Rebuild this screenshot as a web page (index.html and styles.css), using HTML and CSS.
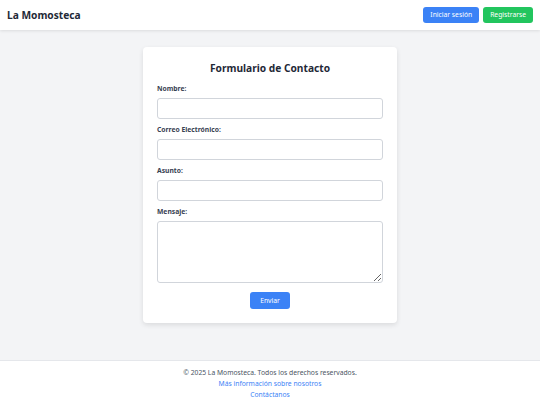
FILE: index.html
```html
<!DOCTYPE html>
<html lang="es">
<head>
  <meta charset="UTF-8">
  <meta name="viewport" content="width=device-width, initial-scale=1.0">
  <title>Contacto - La Momosteca</title>
  <link rel="stylesheet" href="styles.css">
</head>
<body>

<header class="topbar">
  <h1 class="brand">La Momosteca</h1>
  <nav class="actions">
    <a href="#" class="btn btn-blue">Iniciar sesión</a>
    <a href="#" class="btn btn-green">Registrarse</a>
  </nav>
</header>

<main class="main">
  <form class="card" id="contactForm">
    <h2 class="card-title">Formulario de Contacto</h2>

    <label for="nombre">Nombre:</label>
    <input type="text" id="nombre">

    <label for="correo">Correo Electrónico:</label>
    <input type="email" id="correo">

    <label for="asunto">Asunto:</label>
    <input type="text" id="asunto">

    <label for="mensaje">Mensaje:</label>
    <textarea id="mensaje"></textarea>

    <div class="submit-row">
      <button type="button" class="btn btn-blue btn-send">Enviar</button>
    </div>
  </form>
</main>

<footer class="footer">
  <p>© 2025 La Momosteca. Todos los derechos reservados.</p>
  <a href="#">Más información sobre nosotros</a>
  <a href="#">Contáctanos</a>
</footer>

</body>
</html>
```

FILE: styles.css
```css
body {
  font-family: 'Noto Sans', sans-serif;
  background-color: #f3f4f6;
  margin: 0;
  padding: 0;
  color: #1f2937;
}

.topbar {
  background-color: #fff;
  height: 30px;
  display: flex;
  align-items: center;
  justify-content: space-between;
  padding: 0 7px;
  box-shadow: 0 1px 3px rgba(0, 0, 0, 0.1);
}

.brand {
  margin: 0;
  font-size: 10.2px;
  font-weight: 700;
  color: #1f2937;
}

.actions {
  display: flex;
  gap: 4px;
}

.btn {
  display: inline-block;
  font-family: inherit;
  font-size: 6.75px;
  color: #fff;
  text-decoration: none;
  border: none;
  border-radius: 3px;
  padding: 0 7px;
  height: 16px;
  line-height: 16px;
  cursor: pointer;
}

.btn-blue {
  background-color: #3b82f6;
}

.btn-green {
  background-color: #22c55e;
}

.main {
  padding: 17px 0 37px;
  display: flex;
  justify-content: center;
}

.card {
  background-color: #fff;
  width: 254px;
  height: 276px;
  box-sizing: border-box;
  padding: 13px 14px;
  border-radius: 4px;
  box-shadow: 0 2px 5px rgba(0, 0, 0, 0.1);
}

.card-title {
  margin: 0 0 8px;
  text-align: center;
  font-size: 10.2px;
  font-weight: 700;
  color: #1f2937;
  line-height: 16px;
}

label {
  display: block;
  font-size: 6.75px;
  font-weight: 700;
  color: #374151;
  line-height: 10px;
  margin-bottom: 4px;
}

input, textarea {
  display: block;
  width: 100%;
  box-sizing: border-box;
  height: 21px;
  margin: 0 0 6px;
  border: 1px solid #d1d5db;
  border-radius: 3px;
  outline: none;
  font-family: inherit;
  font-size: 7px;
}

textarea {
  height: 62px;
  margin-bottom: 9px;
  resize: vertical;
}

.submit-row {
  display: flex;
  justify-content: center;
}

.btn-send {
  width: 40px;
  padding: 0;
  height: 17px;
  line-height: 17px;
}

.footer {
  background-color: #fff;
  border-top: 1px solid #e5e7eb;
  height: 45px;
  box-sizing: border-box;
  padding-top: 6px;
  text-align: center;
  font-size: 6.75px;
  line-height: 11px;
}

.footer p {
  margin: 0;
  color: #4b5563;
}

.footer a {
  display: block;
  color: #3b82f6;
  text-decoration: none;
}
```
